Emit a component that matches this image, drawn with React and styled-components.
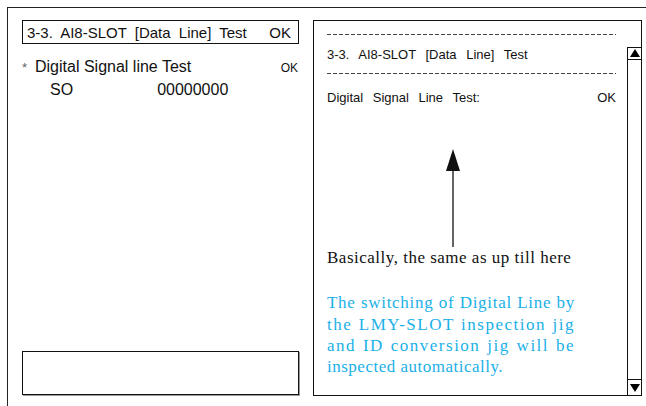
import React from 'react';
import styled, { createGlobalStyle } from 'styled-components';

const GlobalStyle = createGlobalStyle`
  html, body {
    margin: 0;
    padding: 0;
    background: #fff;
  }
  body {
    width: 646px;
    height: 406px;
    overflow: hidden;
    font-family: "Liberation Sans", Arial, sans-serif;
    color: #111;
  }
`;

const Frame = styled.div`
  box-sizing: border-box;
  margin: 7px 0 0 7px;
  height: 399px;
  border-top: 1px solid #222;
  border-left: 1px solid #222;
  padding: 12px 0 0 14px;
  display: flex;
  gap: 14px;
`;

const LeftColumn = styled.div`
  width: 277px;
  height: 375px;
  display: flex;
  flex-direction: column;
`;

const TitleBox = styled.div`
  box-sizing: border-box;
  height: 24px;
  border: 1px solid #111;
  padding: 0 7px 0 4px;
  display: flex;
  align-items: center;
  justify-content: space-between;
  font-size: 15px;
  word-spacing: 4px;
`;

const TestLine = styled.div`
  display: flex;
  align-items: baseline;
  margin-top: ${(p) => p.$top || 0}px;
  padding-left: ${(p) => p.$indent || 0}px;
  font-size: 16px;
  line-height: 20px;
`;

const Star = styled.span`
  width: 13px;
  color: #666;
  font-size: 13px;
`;

const Grow = styled.span`
  flex: 1;
`;

const SmallOk = styled.span`
  font-size: 12px;
  padding-right: 1px;
`;

const Value = styled.span`
  margin-left: ${(p) => p.$left}px;
`;

const Spacer = styled.div`
  flex: 1;
`;

const MessageBox = styled.div`
  box-sizing: border-box;
  height: 44px;
  border: 1px solid #111;
  box-shadow: 1px 1px 0 #999;
`;

const Panel = styled.div`
  box-sizing: border-box;
  width: 329px;
  height: 376px;
  border: 1px solid #111;
  display: flex;
`;

const Content = styled.div`
  flex: 1;
  padding: 12px 11px 0 13px;
  display: flex;
  flex-direction: column;
`;

const Dashes = styled.div`
  height: 1px;
  background: repeating-linear-gradient(90deg, #444 0 4px, transparent 4px 6px);
  margin: ${(p) => p.$m};
`;

const PanelLine = styled.div`
  display: flex;
  justify-content: space-between;
  font-size: 13px;
  line-height: 15px;
  word-spacing: 6px;
  margin: ${(p) => p.$m};
`;

const ArrowWrap = styled.div`
  display: flex;
  margin: 44px 0 0 118px;
`;

const Note = styled.div`
  font-family: "Liberation Serif", "Times New Roman", serif;
  font-size: 17px;
  line-height: 21.3px;
  letter-spacing: 0.5px;
  color: ${(p) => p.$color || '#111'};
  margin-top: ${(p) => p.$top}px;
`;

const JustLine = styled.div`
  width: 248px;
  letter-spacing: ${(p) => p.$ls}px;
  text-align: justify;
  text-align-last: ${(p) => (p.$last ? 'left' : 'justify')};
`;

const Scrollbar = styled.div`
  width: 13px;
  margin-top: 26px;
  border-left: 1px solid #111;
  display: flex;
  flex-direction: column;
  justify-content: space-between;
`;

const ArrowButton = styled.div`
  box-sizing: border-box;
  height: ${(p) => p.$h}px;
  border-top: 1px solid #111;
  border-bottom: ${(p) => (p.$down ? 'none' : '1px solid #111')};
  display: flex;
  align-items: center;
  justify-content: center;
`;

const Tri = ({ down }) => (
  <svg width="10" height="9" viewBox="0 0 10 9">
    <polygon points={down ? '0,1 10,1 5,9' : '5,0 10,8 0,8'} fill="#000" />
  </svg>
);

const blueLines = [
  { text: 'The switching of Digital Line by', ls: 0.7 },
  { text: 'the LMY-SLOT inspection jig', ls: 1.5 },
  { text: 'and ID conversion jig will be', ls: 1.5 },
  { text: 'inspected automatically.', ls: 0.5 },
];

const App = () => (
  <>
    <GlobalStyle />
    <Frame>
      <LeftColumn>
        <TitleBox>
          <span>3-3.  AI8-SLOT  [Data  Line]  Test</span>
          <span>OK</span>
        </TitleBox>
        <TestLine $top={13}>
          <Star>*</Star>
          <Grow>Digital Signal line Test</Grow>
          <SmallOk>OK</SmallOk>
        </TestLine>
        <TestLine $top={2} $indent={28}>
          <span>SO</span>
          <Value $left={84}>00000000</Value>
        </TestLine>
        <Spacer />
        <MessageBox />
      </LeftColumn>
      <Panel>
        <Content>
          <Dashes $m="1px 0 0 0" />
          <PanelLine $m="12px 0 0 0">
            <span>3-3. AI8-SLOT [Data Line] Test</span>
          </PanelLine>
          <Dashes $m="11px 0 0 0" />
          <PanelLine $m="16px 0 0 0">
            <span>Digital Signal Line Test:</span>
            <span>OK</span>
          </PanelLine>
          <ArrowWrap>
            <svg width="16" height="98" viewBox="0 0 16 98">
              <polygon points="8,0 15,22 1,22" fill="#111" />
              <line x1="8" y1="20" x2="8" y2="98" stroke="#111" strokeWidth="1.3" />
            </svg>
          </ArrowWrap>
          <Note $top={0}>Basically, the same as up till here</Note>
          <Note $top={24} $color="#1ab0e8">
            {blueLines.map((l, i) => (
              <JustLine key={l.text} $ls={l.ls} $last={i === blueLines.length - 1}>
                {l.text}
              </JustLine>
            ))}
          </Note>
        </Content>
        <Scrollbar>
          <ArrowButton $h={13}><Tri /></ArrowButton>
          <ArrowButton $h={16} $down><Tri down /></ArrowButton>
        </Scrollbar>
      </Panel>
    </Frame>
  </>
);

export default App;
